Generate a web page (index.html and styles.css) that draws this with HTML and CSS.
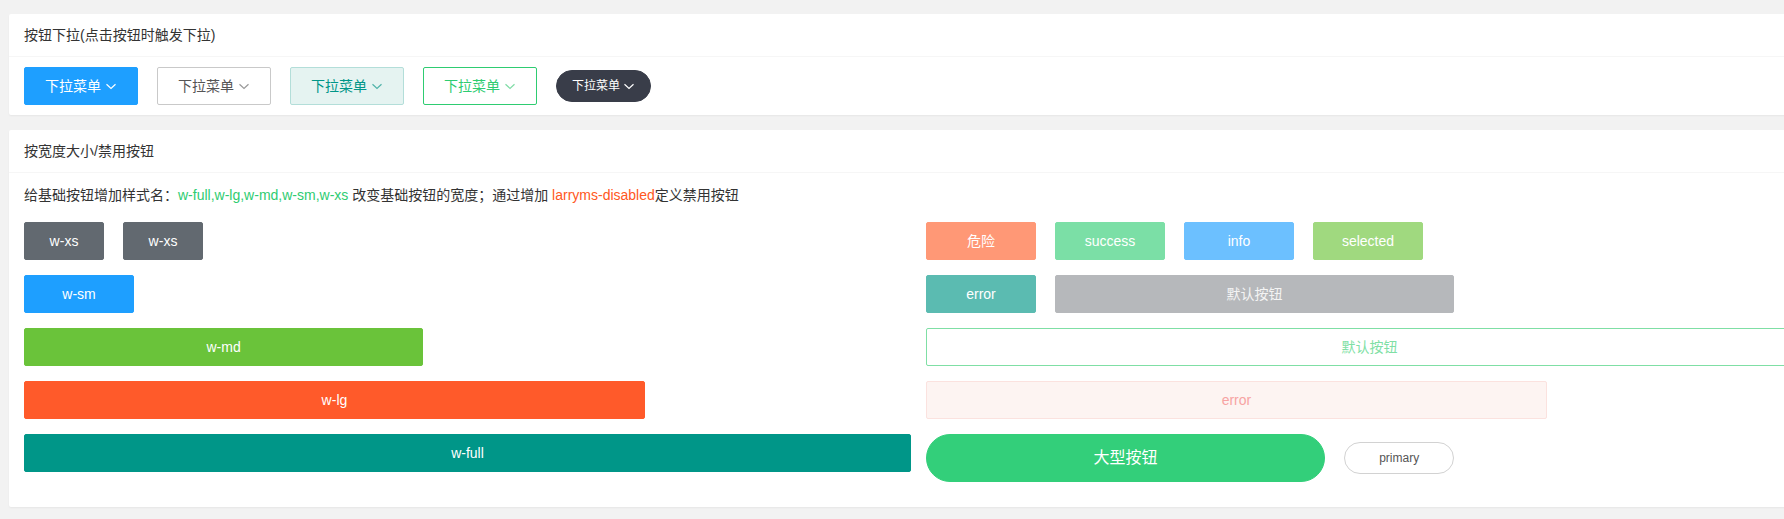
FILE: index.html
```html
<!DOCTYPE html>
<html lang="zh-CN">
<head>
<meta charset="utf-8">
<title>按钮</title>
<link rel="stylesheet" href="styles.css">
</head>
<body>
<div class="page">
  <div class="card">
    <div class="card-header">按钮下拉(点击按钮时触发下拉)</div>
    <div class="card-body drop-row">
      <button class="btn dd dd-blue">下拉菜单<svg class="chev" viewBox="0 0 12 12"><path d="M1.5 4.2 L6 8.4 L10.5 4.2"/></svg></button>
      <button class="btn dd dd-plain">下拉菜单<svg class="chev" viewBox="0 0 12 12"><path d="M1.5 4.2 L6 8.4 L10.5 4.2"/></svg></button>
      <button class="btn dd dd-teal">下拉菜单<svg class="chev" viewBox="0 0 12 12"><path d="M1.5 4.2 L6 8.4 L10.5 4.2"/></svg></button>
      <button class="btn dd dd-green">下拉菜单<svg class="chev" viewBox="0 0 12 12"><path d="M1.5 4.2 L6 8.4 L10.5 4.2"/></svg></button>
      <button class="btn dd dd-dark">下拉菜单<svg class="chev" viewBox="0 0 12 12"><path d="M1.5 4.2 L6 8.4 L10.5 4.2"/></svg></button>
    </div>
  </div>

  <div class="card">
    <div class="card-header">按宽度大小/禁用按钮</div>
    <div class="card-body body2">
      <p class="desc">给基础按钮增加样式名：<span class="g">w-full,w-lg,w-md,w-sm,w-xs</span> 改变基础按钮的宽度；通过增加 <span class="r">larryms-disabled</span>定义禁用按钮</p>
      <div class="cols">
        <div class="col">
          <div class="line">
            <button class="btn w-xs c-gray">w-xs</button>
            <button class="btn w-xs c-gray">w-xs</button>
          </div>
          <div class="line"><button class="btn w-sm c-blue">w-sm</button></div>
          <div class="line"><button class="btn w-md c-lime">w-md</button></div>
          <div class="line"><button class="btn w-lg c-orange">w-lg</button></div>
          <div class="line"><button class="btn w-full c-teal">w-full</button></div>
        </div>
        <div class="col">
          <div class="line">
            <button class="btn w-sm d-orange">危险</button>
            <button class="btn w-sm d-green">success</button>
            <button class="btn w-sm d-blue">info</button>
            <button class="btn w-sm d-lime">selected</button>
          </div>
          <div class="line">
            <button class="btn w-sm d-teal">error</button>
            <button class="btn w-md d-gray">默认按钮</button>
          </div>
          <div class="line"><button class="btn w-full o-green">默认按钮</button></div>
          <div class="line"><button class="btn w-lg o-red">error</button></div>
          <div class="line mid">
            <button class="btn w-md big">大型按钮</button>
            <button class="btn w-sm pill-plain">primary</button>
          </div>
        </div>
      </div>
    </div>
  </div>
</div>
</body>
</html>
```

FILE: styles.css
```css
html, body {
  margin: 0;
  padding: 0;
  background: #f2f2f2;
  overflow: hidden;
}

body {
  font-family: "Liberation Sans", "Noto Sans CJK SC", sans-serif;
  font-size: 14px;
  color: #333;
}

.page {
  width: 1819px;
  padding: 14px 0 0 9px;
}

.card {
  background: #fff;
  border-radius: 2px;
  box-shadow: 0 1px 2px 0 rgba(0, 0, 0, 0.05);
  margin-bottom: 15px;
}

.card-header {
  height: 42px;
  line-height: 42px;
  padding: 0 15px;
  border-bottom: 1px solid #f6f6f6;
  font-size: 14px;
  color: #333;
}

.card-body {
  padding: 10px 15px;
  line-height: 24px;
}

.drop-row {
  display: flex;
  align-items: center;
  gap: 19px;
}

.btn {
  box-sizing: border-box;
  height: 38px;
  border: 1px solid transparent;
  border-radius: 2px;
  padding: 0;
  font-family: inherit;
  font-size: 14px;
  line-height: 36px;
  color: #fff;
  text-align: center;
  white-space: nowrap;
  cursor: pointer;
}

.dd {
  display: inline-flex;
  align-items: center;
  padding: 0 20px;
}

.chev {
  width: 12px;
  height: 12px;
  margin-left: 4px;
  fill: none;
  stroke: currentColor;
  stroke-width: 1.2;
}

.dd-blue { background: #1e9fff; border-color: #1e9fff; color: #fff; }
.dd-plain { background: #fff; border-color: #c9c9c9; color: #555; }
.dd-plain .chev { stroke: #999; }
.dd-teal { background: #e5f3f1; border-color: #b3ded9; color: #009688; }
.dd-teal .chev { stroke: #4fb3a9; }
.dd-green { background: #fff; border-color: #2ecc71; color: #2ecc71; }
.dd-green .chev { stroke: #7fdca6; }
.dd-dark {
  height: 32px;
  line-height: 30px;
  padding: 0 15px;
  border-radius: 16px;
  background: #393d49;
  border-color: #393d49;
  font-size: 12px;
}
.dd-dark .chev { margin-left: 3px; }

.body2 {
  padding-bottom: 25px;
}

.desc {
  margin: 0 0 15px;
  line-height: 24px;
}
.desc .g { color: #2ecc71; }
.desc .r { color: #ff5722; }

.cols {
  display: grid;
  grid-template-columns: 1fr 1fr;
  column-gap: 15px;
}

.col {
  display: flex;
  flex-direction: column;
  gap: 15px;
}

.line {
  display: flex;
  gap: 19px;
}
.line.mid { align-items: center; }

.w-xs { width: 80px; }
.w-sm { width: 110px; }
.w-md { width: 45%; }
.w-lg { width: 70%; }
.w-full { width: 100%; }

.c-gray { background: #626970; border-color: #626970; }
.c-blue { background: #1e9fff; border-color: #1e9fff; }
.c-lime { background: #6ac33a; border-color: #6ac33a; }
.c-orange { background: #ff5a2a; border-color: #ff5a2a; }
.c-teal { background: #009688; border-color: #009688; }

.d-orange { background: #ff9876; border-color: #ff9876; }
.d-green { background: #7bdfa6; border-color: #7bdfa6; }
.d-blue { background: #6cc0ff; border-color: #6cc0ff; }
.d-lime { background: #a0d97f; border-color: #a0d97f; }
.d-teal { background: #5bbbb1; border-color: #5bbbb1; }
.d-gray { background: #b6b8bb; border-color: #b6b8bb; color: #f4f4f4; }

.o-green { background: #fff; border-color: #7fdfa5; color: #7fdfa5; }
.o-red { background: #fdf4f2; border-color: #fbe2df; color: #f7a3a3; }

.big {
  height: 48px;
  line-height: 46px;
  border-radius: 24px;
  background: #33cf7a;
  border-color: #33cf7a;
  font-size: 16px;
}

.pill-plain {
  height: 32px;
  line-height: 30px;
  border-radius: 16px;
  background: #fff;
  border-color: #d2d2d2;
  color: #555;
  font-size: 12px;
}
```
